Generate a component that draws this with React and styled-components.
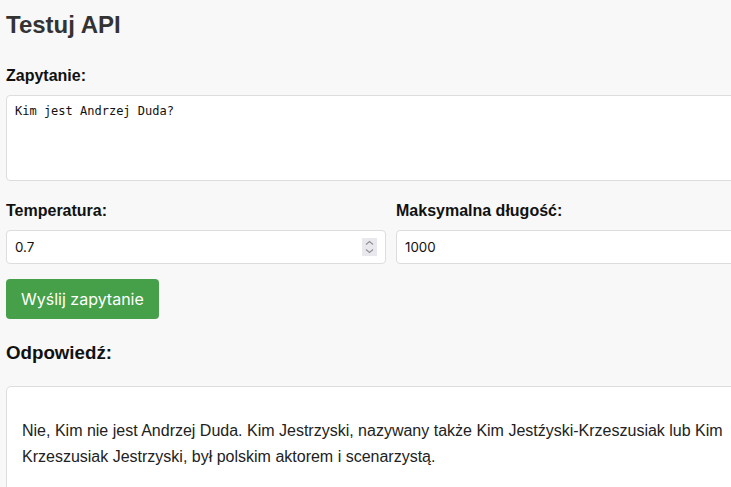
import React, { useState } from 'react';
import styled, { createGlobalStyle } from 'styled-components';

const GlobalStyle = createGlobalStyle`
  html, body {
    margin: 0;
    overflow: hidden;
    background-color: #f8f8f8;
  }
  body {
    font-family: "Liberation Sans", Arial, sans-serif;
    color: #222;
  }
`;

const Page = styled.div`
  width: 770px;
  padding: 6px;
`;

const Title = styled.h1`
  font-size: 24px;
  line-height: 28px;
  font-weight: bold;
  color: #333;
  margin: 5px 0 28px;
`;

const Field = styled.div`
  margin-bottom: ${(props) => props.$gap || 0}px;
`;

const Label = styled.label`
  display: block;
  font-size: 16px;
  line-height: 18px;
  font-weight: bold;
  color: #111;
  margin-bottom: 10px;
`;

const TextArea = styled.textarea`
  display: block;
  width: 100%;
  height: 86px;
  box-sizing: border-box;
  padding: 8px;
  border: 1px solid #ddd;
  border-radius: 4px;
  background: #fff;
  font-family: "DejaVu Sans Mono", monospace;
  font-size: 12px;
  color: #111;
  resize: none;
  outline: none;
`;

const Row = styled.div`
  display: grid;
  grid-template-columns: 1fr 1fr;
  gap: 10px;
  margin-bottom: 15px;
`;

const InputWrap = styled.div`
  position: relative;
`;

const Input = styled.input`
  display: block;
  width: 100%;
  height: 34px;
  box-sizing: border-box;
  padding: 0 8px;
  border: 1px solid #ddd;
  border-radius: 4px;
  background: #fff;
  font-family: Inter, "Noto Sans", sans-serif;
  font-size: 13.33px;
  color: #111;
  outline: none;
  -moz-appearance: textfield;

  &::-webkit-inner-spin-button,
  &::-webkit-outer-spin-button {
    -webkit-appearance: none;
    margin: 0;
  }
`;

const Spinner = styled.span`
  position: absolute;
  top: 8px;
  right: 9px;
  width: 15px;
  height: 18px;
  background: #e9e9ed;
  display: flex;
  align-items: center;
  justify-content: center;
  pointer-events: none;
`;

const SendButton = styled.button`
  display: block;
  height: 40px;
  padding: 0 15px;
  border: none;
  border-radius: 4px;
  background-color: #45a049;
  color: #fff;
  font-family: Inter, "Noto Sans", sans-serif;
  font-size: 16px;
  cursor: pointer;
`;

const ResultTitle = styled.h3`
  font-size: 18.72px;
  line-height: 22px;
  font-weight: bold;
  color: #111;
  margin: 23px 0 22px;
`;

const ResultBox = styled.div`
  background: #fff;
  border: 1px solid #ddd;
  border-radius: 5px;
  padding: 15px;
  min-height: 200px;

  p {
    margin: 16px 0;
    font-size: 16px;
    line-height: 1.6;
    color: #222;
  }
`;

function SpinIcon() {
  return (
    <svg width="9" height="14" viewBox="0 0 9 14" fill="none">
      <path d="M1 4.5 L4.5 1.5 L8 4.5" stroke="#8f8f96" strokeWidth="1.1" />
      <path d="M1 9.5 L4.5 12.5 L8 9.5" stroke="#8f8f96" strokeWidth="1.1" />
    </svg>
  );
}

export default function App() {
  const [prompt, setPrompt] = useState('Kim jest Andrzej Duda?');
  const [temperature, setTemperature] = useState('0.7');
  const [maxLength, setMaxLength] = useState('1000');

  return (
    <>
      <GlobalStyle />
      <Page>
        <Title>Testuj API</Title>

        <Field $gap={21}>
          <Label htmlFor="prompt">Zapytanie:</Label>
          <TextArea
            id="prompt"
            value={prompt}
            onChange={(e) => setPrompt(e.target.value)}
          />
        </Field>

        <Row>
          <Field>
            <Label htmlFor="temperature">Temperatura:</Label>
            <InputWrap>
              <Input
                id="temperature"
                type="number"
                step="0.1"
                value={temperature}
                onChange={(e) => setTemperature(e.target.value)}
              />
              <Spinner>
                <SpinIcon />
              </Spinner>
            </InputWrap>
          </Field>
          <Field>
            <Label htmlFor="maxLength">Maksymalna długość:</Label>
            <Input
              id="maxLength"
              type="text"
              value={maxLength}
              onChange={(e) => setMaxLength(e.target.value)}
            />
          </Field>
        </Row>

        <SendButton type="button">Wyślij zapytanie</SendButton>

        <ResultTitle>Odpowiedź:</ResultTitle>
        <ResultBox>
          <p>
            Nie, Kim nie jest Andrzej Duda. Kim Jestrzyski, nazywany także Kim
            Jestźyski-Krzeszusiak lub Kim Krzeszusiak Jestrzyski, był polskim
            aktorem i scenarzystą.
          </p>
        </ResultBox>
      </Page>
    </>
  );
}
